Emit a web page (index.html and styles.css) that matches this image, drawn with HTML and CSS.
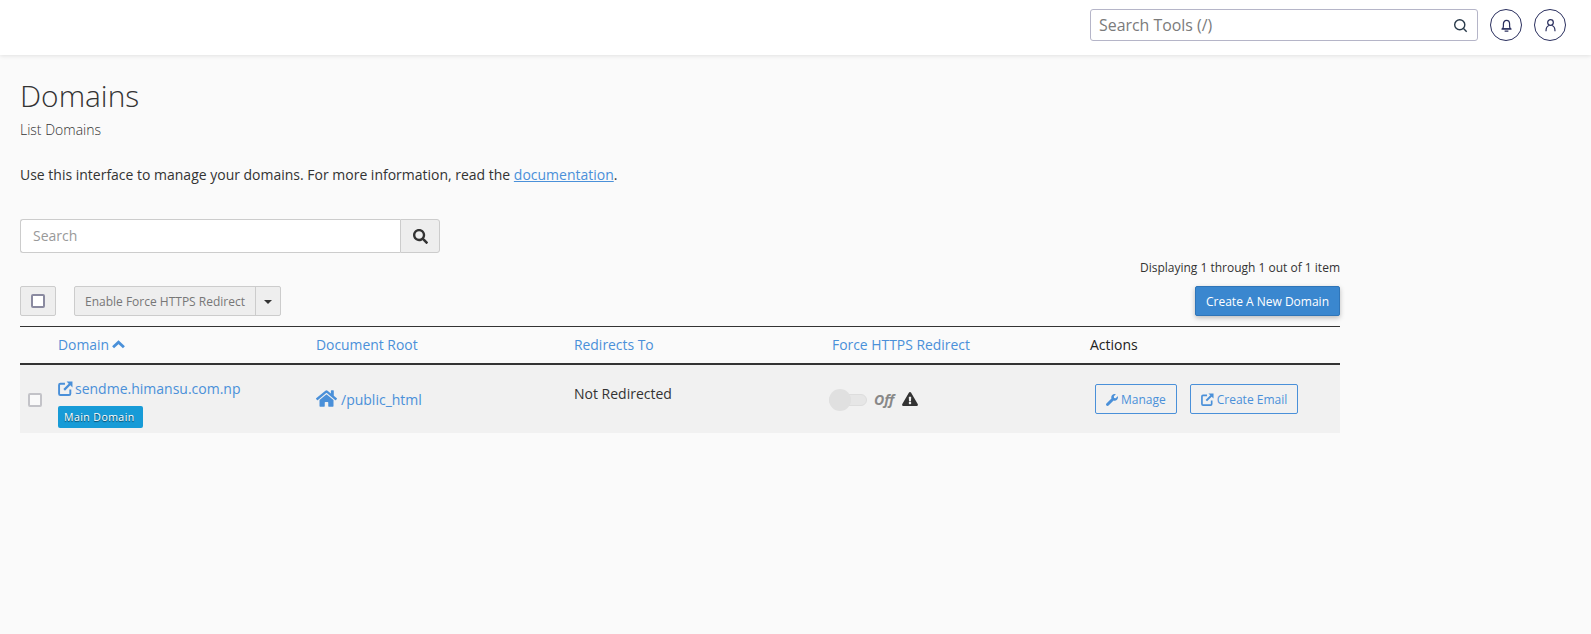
FILE: index.html
```html
<!DOCTYPE html>
<html lang="en">
<head>
<meta charset="utf-8">
<title>Domains</title>
<link rel="stylesheet" href="styles.css">
</head>
<body>
<header class="topbar">
  <div class="tool-search">
    <span class="tool-search-text">Search Tools (/)</span>
    <svg class="tool-search-icon" viewBox="0 0 16 16"><circle cx="7.2" cy="7.2" r="5.4"/><path d="M11.2 11.2 14.6 14.6"/></svg>
  </div>
  <button class="circle-btn"><svg viewBox="0 0 16 16"><path d="M3.800 11.500c.6-.8.9-1.500.9-3V6.500C4.700 4.300 6 2.600 8 2.600s3.300 1.700 3.300 3.900v2c0 1.500.3 2.200.9 3z"/><path d="M2.800 11.500h10.400M6 14h4"/></svg></button>
  <button class="circle-btn"><svg viewBox="0 0 16 16"><circle cx="8" cy="4.800" r="3"/><path d="M3.200 14.200c0-3.200 1.600-5.900 3.400-6.200M12.800 14.200c0-3.200-1.600-5.900-3.400-6.200"/></svg></button>
</header>
<main class="page">
  <h1 class="title">Domains</h1>
  <p class="subtitle">List Domains</p>
  <p class="intro">Use this interface to manage your domains. For more information, read the <a href="#">documentation</a>.</p>
  <div class="search-group">
    <div class="search-input">Search</div>
    <div class="search-btn"><svg viewBox="0 0 512 512"><path d="M505 442.700 405.300 343c-4.500-4.500-10.600-7-17-7H372c27.600-35.300 44-79.700 44-128C416 93.100 322.900 0 208 0S0 93.100 0 208s93.100 208 208 208c48.300 0 92.700-16.400 128-44v16.300c0 6.400 2.500 12.500 7 17l99.700 99.700c9.400 9.400 24.600 9.400 33.900 0l28.300-28.300c9.400-9.400 9.400-24.600.1-34zM208 336c-70.700 0-128-57.200-128-128 0-70.700 57.200-128 128-128 70.700 0 128 57.200 128 128 0 70.700-57.200 128-128 128z"/></svg></div>
  </div>
  <div class="toolbar">
    <div class="toolbar-left">
      <div class="select-all"><span class="box box-dark"></span></div>
      <div class="split">
        <div class="split-main">Enable Force HTTPS Redirect</div>
        <div class="split-caret"><span class="caret"></span></div>
      </div>
    </div>
    <div class="toolbar-right">
      <div class="count">Displaying 1 through 1 out of 1 item</div>
      <button class="primary">Create A New Domain</button>
    </div>
  </div>
  <table class="domains">
    <thead>
      <tr>
        <th class="col-check"></th>
        <th class="col-domain"><a href="#">Domain</a> <svg class="chevron" viewBox="0 0 12 8"><path d="M1 6.500 6 1.800l5 4.700"/></svg></th>
        <th class="col"><a href="#">Document Root</a></th>
        <th class="col"><a href="#">Redirects To</a></th>
        <th class="col"><a href="#">Force HTTPS Redirect</a></th>
        <th>Actions</th>
      </tr>
    </thead>
    <tbody>
      <tr>
        <td class="cell-check"><span class="box"></span></td>
        <td class="cell-domain">
          <a class="domain-link" href="#"><svg class="ext-icon" viewBox="0 0 14 14"><path class="ext-frame" d="M6.500 2.500H2.200c-.7 0-1.200.5-1.200 1.200v8.100c0 .7.5 1.200 1.200 1.200h8.100c.7 0 1.200-.5 1.200-1.200V8"/><path class="ext-fill" d="M8 .5h5.500V6l-2-2-5 5L5 7.500l5-5z"/></svg>sendme.himansu.com.np</a>
          <span class="label">Main Domain</span>
        </td>
        <td class="cell-root"><a href="#"><svg class="home-icon" viewBox="0 0 576 512"><path d="M280.400 148.300 96 300.100V464a16 16 0 0 0 16 16l112.100-.3a16 16 0 0 0 15.900-16V368a16 16 0 0 1 16-16h64a16 16 0 0 1 16 16v95.600a16 16 0 0 0 16 16.100L464 480a16 16 0 0 0 16-16V300L295.700 148.300a12.200 12.200 0 0 0-15.300 0zM571.600 251.500 488 182.600V44.100a12 12 0 0 0-12-12h-56a12 12 0 0 0-12 12v72.600L318.500 43a48 48 0 0 0-61 0L4.300 251.500a12 12 0 0 0-1.600 16.900l25.500 31A12 12 0 0 0 45.200 301l235.200-193.700a12.200 12.200 0 0 1 15.300 0L530.900 301a12 12 0 0 0 16.900-1.600l25.500-31a12 12 0 0 0-1.700-16.900z"/></svg>/public_html</a></td>
        <td class="cell-redirect">Not Redirected</td>
        <td class="cell-force">
          <div class="force">
            <span class="toggle"><span class="knob"></span></span>
            <span class="off">Off</span>
            <svg class="warn" viewBox="0 0 576 512"><path d="M569.500 440C588 472 564.800 512 527.900 512H48.100c-36.900 0-60-40-41.600-72L246.400 24c18.500-32 64.700-32 83.200 0zM288 354c-25.400 0-46 20.600-46 46s20.600 46 46 46 46-20.600 46-46-20.600-46-46-46zm-43.700-165.300 7.400 136c.3 6.400 5.600 11.300 12 11.300h48.500c6.400 0 11.600-5 12-11.300l7.400-136c.4-6.900-5.100-12.700-12-12.700h-63.400c-6.900 0-12.400 5.800-12 12.700z"/></svg>
          </div>
        </td>
        <td class="cell-actions">
          <div class="actions">
            <a class="btn-outline" href="#"><svg class="btn-icon" viewBox="0 0 512 512"><path d="M507.700 109.100c-2.200-9-13.500-12.100-20.100-5.500l-74.400 74.400-67.900-11.300-11.300-67.900 74.400-74.400c6.600-6.600 3.400-17.900-5.700-20.200-47.400-11.700-99.600.9-136.600 37.900-39.600 39.600-50.600 97.100-34 147L18.700 402.800c-25 25-25 65.500 0 90.500s65.500 25 90.500 0l213.200-213.200c50 16.700 107.500 5.700 147.300-34.100 37-37 49.600-89.300 38-136.900z"/></svg>Manage</a>
            <a class="btn-outline" href="#"><svg class="btn-icon ext-small" viewBox="0 0 14 14"><path class="ext-frame" d="M6.500 2.500H2.200c-.7 0-1.200.5-1.200 1.200v8.100c0 .7.5 1.200 1.200 1.200h8.100c.7 0 1.200-.5 1.200-1.200V8"/><path class="ext-fill" d="M8 .5h5.500V6l-2-2-5 5L5 7.500l5-5z"/></svg>Create Email</a>
          </div>
        </td>
      </tr>
    </tbody>
  </table>
</main>
</body>
</html>
```

FILE: styles.css
```css
* { box-sizing: border-box; }
html, body { margin: 0; padding: 0; }
body {
  background: #fafafa;
  color: #333;
  font-family: "Open Sans", sans-serif;
  font-size: 14px;
  line-height: 20px;
  height: 634px;
  overflow: hidden;
}
a { color: #4a90d9; text-decoration: none; }

.topbar {
  height: 55px;
  background: #fff;
  box-shadow: 0 1px 4px rgba(0,0,0,.1);
  display: flex;
  align-items: flex-start;
  justify-content: flex-end;
  padding: 9px 25px 0 0;
  gap: 12px;
}
.tool-search {
  width: 388px;
  height: 32px;
  border: 1px solid #b5b5c8;
  border-radius: 3px;
  background: #fff;
  display: flex;
  align-items: center;
  justify-content: space-between;
  padding: 0 9px 0 8px;
  font-size: 15.900px;
  color: #7b7b7b;
}
.tool-search-icon { width: 15px; height: 15px; fill: none; stroke: #293a4a; stroke-width: 1.500; }
.circle-btn {
  width: 32px;
  height: 32px;
  border: 1px solid #2a2f5e;
  border-radius: 50%;
  background: #fff;
  padding: 0;
  display: flex;
  align-items: center;
  justify-content: center;
}
.circle-btn svg { width: 15px; height: 15px; fill: none; stroke: #2a2f5e; stroke-width: 1.300; }

.page { padding: 0 251px 0 20px; }
.title {
  margin: 20px 0 0;
  font-size: 29.900px;
  line-height: 42px;
  font-weight: 300;
  color: #333;
}
.subtitle { margin: 3px 0 0; font-weight: 300; color: #333; line-height: 20px; font-size: 14px; }
.intro { margin: 25px 0 0; line-height: 20px; font-size: 13.990px; }
.intro a { text-decoration: underline; }

.search-group { display: flex; width: 420px; height: 34px; margin-top: 34px; }
.search-input {
  flex: 1;
  background: #fff;
  border: 1px solid #ccc;
  border-right: 0;
  border-radius: 3px 0 0 3px;
  padding: 6px 12px;
  color: #999;
}
.search-btn {
  width: 40px;
  background: #eee;
  border: 1px solid #ccc;
  border-radius: 0 3px 3px 0;
  display: flex;
  align-items: center;
  justify-content: center;
}
.search-btn svg { width: 15px; height: 15px; fill: #333; }

.toolbar {
  display: flex;
  justify-content: space-between;
  align-items: flex-end;
  height: 61px;
  margin-top: 2px;
}
.toolbar-left { display: flex; gap: 18px; }
.select-all {
  width: 36px;
  height: 30px;
  background: #eee;
  border: 1px solid #ccc;
  border-radius: 2px;
  display: flex;
  align-items: center;
  justify-content: center;
}
.box {
  display: block;
  width: 14px;
  height: 14px;
  border: 2px solid #c3c3c8;
  border-radius: 2px;
  background: #fafafa;
}
.box-dark { border-color: #8a8aa0; background: #fff; }
.split {
  display: flex;
  height: 30px;
  background: #eee;
  border: 1px solid #ccc;
  border-radius: 2px;
}
.split-main {
  width: 181px;
  border-right: 1px solid #ccc;
  color: #777;
  font-size: 12px;
  line-height: 29px;
  text-align: center;
}
.split-caret { width: 24px; display: flex; align-items: center; justify-content: center; }
.caret {
  width: 0; height: 0;
  margin-top: 2px;
  border-left: 4px solid transparent;
  border-right: 4px solid transparent;
  border-top: 4px solid #333;
}
.toolbar-right { display: flex; flex-direction: column; align-items: flex-end; }
.count { font-size: 12px; line-height: 16px; margin-bottom: 10px; color: #333; }
.primary {
  width: 145px;
  height: 30px;
  background: #3a87cf;
  color: #fff;
  border: 1px solid #2f75b8;
  border-radius: 2px;
  font-family: inherit;
  font-size: 12px;
  padding: 0;
  box-shadow: 0 2px 5px rgba(0,0,0,.25);
}

.domains {
  width: 1320px;
  border-collapse: collapse;
  table-layout: fixed;
  margin-top: 10px;
}
.domains thead tr { border-top: 1px solid #333; border-bottom: 2px solid #333; }
.domains th {
  height: 37px;
  padding: 0;
  text-align: left;
  font-weight: 400;
  color: #222;
}
.domains th a { font-size: 13.900px; }
.col-check { width: 38px; }
.col-domain { width: 258px; }
.col { width: 258px; }
.chevron { width: 13px; height: 9px; fill: none; stroke: #4a90d9; stroke-width: 2.600; margin-left: -1px; vertical-align: 1px; }
.domains tbody tr { background: #f1f1f1; height: 69px; }
.domains td { padding: 0; vertical-align: top; }
.cell-check { padding: 28px 0 0 8px !important; }
.cell-domain { padding-top: 13px !important; }
.domain-link { display: block; line-height: 22px; white-space: nowrap; }
.ext-icon { width: 15px; height: 15px; margin-right: 2px; vertical-align: -2px; }
.ext-frame { fill: none; stroke: currentColor; stroke-width: 1.800; }
.ext-fill { fill: currentColor; }
.label {
  display: inline-block;
  margin-top: 6px;
  height: 22px;
  padding: 0 6px;
  width: 85px;
  background: #179bd7;
  color: #fff;
  font-size: 10.500px;
  font-weight: 500;
  letter-spacing: .45px;
  line-height: 22px;
  border-radius: 2px;
  text-shadow: 0 1px 1px rgba(0,0,0,.6);
}
.cell-root { padding-top: 24px !important; }
.home-icon { width: 21px; height: 19px; fill: currentColor; margin-right: 4px; vertical-align: -3px; }
.cell-redirect { padding-top: 19px !important; color: #333; }
.cell-force { padding-top: 25px !important; }
.force { display: flex; align-items: center; margin-left: -3px; }
.toggle {
  width: 38px;
  height: 12px;
  background: #e6e6e6;
  border: 1px solid #ddd;
  border-radius: 6px;
  display: flex;
  align-items: center;
}
.knob {
  width: 22px;
  height: 22px;
  border-radius: 50%;
  background: #e0e0e0;
  margin-left: -1px;
  flex: none;
}
.off { margin-left: 7px; font-style: italic; font-weight: 700; color: #888; }
.warn { width: 16px; height: 14px; fill: #333; margin-left: 8px; margin-top: -2px; }
.cell-actions { padding-top: 19px !important; }
.actions { display: flex; gap: 13px; margin-left: 5px; }
.btn-outline {
  height: 30px;
  border: 1px solid #4a90d9;
  border-radius: 2px;
  padding: 0 10px;
  font-size: 12px;
  line-height: 29px;
  white-space: nowrap;
}
.btn-icon { width: 12px; height: 12px; fill: currentColor; margin-right: 3px; vertical-align: -2px; }
.ext-small { width: 13px; height: 13px; margin-right: 3px; }
```
